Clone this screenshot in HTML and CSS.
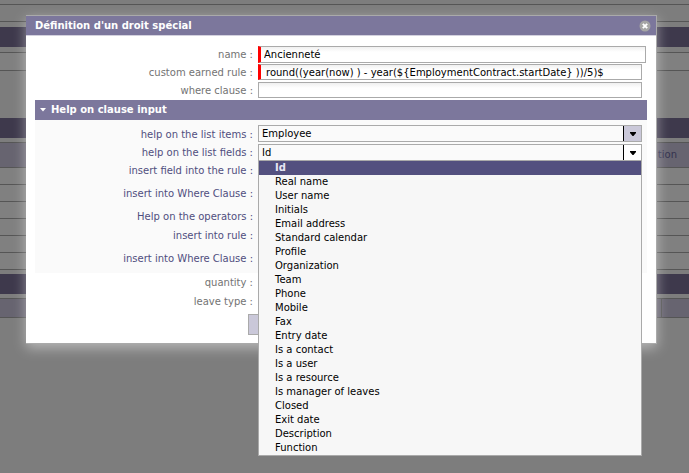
FILE: index.html
```html
<!DOCTYPE html>
<html lang="en">
<head>
<meta charset="utf-8">
<title>Définition d'un droit spécial</title>
<link rel="stylesheet" href="styles.css">
</head>
<body>
<div class="page" inert>
  <div class="line first"></div>
  <div class="line second"></div>
  <div class="bar"></div>
  <div class="block"></div>
  <div class="bar low"></div>
  <div class="head tall"><span>tion</span></div>
  <div class="record"></div>
  <div class="record"></div>
  <div class="record"></div>
  <div class="record"></div>
  <div class="record"></div>
  <div class="record"></div>
  <div class="bar low"></div>
  <div class="head short"><span class="cell"></span></div>
</div>

<div class="dialog" role="dialog" aria-labelledby="dialog-title">
  <header class="dialog-head">
    <h1 id="dialog-title">Définition d'un droit spécial</h1>
    <button class="close" type="button" aria-label="Close">
      <svg viewBox="0 0 12 12" width="12" height="12"><circle cx="6" cy="6" r="5.5" fill="#a5a5a5"/><path d="M3.8 3.8l4.4 4.4M8.2 3.8L3.8 8.2" stroke="#fff" stroke-width="1.9"/></svg>
    </button>
  </header>
  <form class="form">
    <div class="row wide"><label for="name">name :</label><input class="field required" id="name" type="text" value="Ancienneté"></div>
    <div class="row"><label for="rule">custom earned rule :</label><input class="field required indent" id="rule" type="text" value="round((year(now) ) - year(${EmploymentContract.startDate} ))/5)$"></div>
    <div class="row"><label for="where">where clause :</label><input class="field" id="where" type="text"></div>

    <section class="help">
      <h2><svg viewBox="0 0 6 4" width="6" height="4"><path d="M0 0h6L3 3.5z" fill="#fff"/></svg>Help on clause input</h2>
      <div class="panel">
        <div class="row mid"><label for="items">help on the list items :</label>
          <div class="combo">
            <select id="items"><option>Employee</option></select>
            <span class="arrow shaded"><svg viewBox="0 0 6 4" width="6" height="4"><path d="M0 0h6v1L3.5 4h-1L0 1z"/></svg></span>
          </div>
        </div>
        <div class="row"><label for="fields">help on the list fields :</label>
          <div class="combo">
            <select id="fields"><option>Id</option></select>
            <span class="arrow"><svg viewBox="0 0 6 4" width="6" height="4"><path d="M0 0h6v1L3.5 4h-1L0 1z"/></svg></span>
            <ul class="menu" role="listbox">
              <li class="selected" role="option" aria-selected="true">Id</li>
              <li role="option">Real name</li>
              <li role="option">User name</li>
              <li role="option">Initials</li>
              <li role="option">Email address</li>
              <li role="option">Standard calendar</li>
              <li role="option">Profile</li>
              <li role="option">Organization</li>
              <li role="option">Team</li>
              <li role="option">Phone</li>
              <li role="option">Mobile</li>
              <li role="option">Fax</li>
              <li role="option">Entry date</li>
              <li role="option">Is a contact</li>
              <li role="option">Is a user</li>
              <li role="option">Is a resource</li>
              <li role="option">Is manager of leaves</li>
              <li role="option">Closed</li>
              <li role="option">Exit date</li>
              <li role="option">Description</li>
              <li role="option">Function</li>
            </ul>
          </div>
        </div>
        <div class="row"><label for="insert-field">insert field into the rule :</label><input class="field" id="insert-field" type="text"></div>
        <div class="row high"><label for="insert-where">insert into Where Clause :</label><input class="field" id="insert-where" type="text"></div>
        <div class="row"><label for="operators">Help on the operators :</label><input class="field" id="operators" type="text"></div>
        <div class="row mid"><label for="op-rule">insert into rule :</label><input class="field" id="op-rule" type="text"></div>
        <div class="row high"><label for="op-where">insert into Where Clause :</label><input class="field" id="op-where" type="text"></div>
      </div>
    </section>

    <div class="row mid"><label for="quantity">quantity :</label><input class="field" id="quantity" type="text"></div>
    <div class="row mid"><label for="leave">leave type :</label><input class="field" id="leave" type="text"></div>
    <div class="actions"><button class="save" type="button" aria-label="Save"></button></div>
  </form>
</div>
</body>
</html>
```
FILE: styles.css
```css
* { box-sizing: border-box; }

body {
  margin: 0;
  min-height: 100vh;
  position: relative;
  background: #7d7d7d;
  font: 10px/14px "DejaVu Sans", Verdana, sans-serif;
}

input, select, button { font: inherit; }

/* Dimmed page behind the dialog */
.page { display: flow-root; }
.line { border-top: 1px solid #555; }
.line.first { margin-top: 4px; }
.line.second { margin-top: 16px; }
.bar { height: 20px; margin: 5px 0; background: #3e394c; }
.bar.low { margin: 4px 0; }
.block { height: 19px; margin-bottom: 47px; border: solid #555; border-width: 1px 0; background: #808080; }
.head {
  display: flex;
  align-items: center;
  justify-content: flex-end;
  border: solid #555;
  border-width: 1px 0;
  background: #676470;
  color: #34324f;
}
.head.tall { height: 26px; padding-right: 12px; }
.head.short { height: 20px; align-items: stretch; }
.cell { width: 28px; border-left: 1px solid #555; }
.record { height: 17px; border-bottom: 1px solid #555; background: #808080; }

/* Dialog */
.dialog {
  position: absolute;
  top: 15px;
  left: 26px;
  right: 32px;
  border: solid #aaa;
  border-width: 1px 1px 1px 0;
  background: #fff;
  box-shadow: 0 4px 12px rgba(255, 255, 255, .45);
}
.dialog-head {
  display: flex;
  align-items: center;
  justify-content: space-between;
  height: 20px;
  padding: 0 5px 0 9px;
  border-bottom: 1px solid #d3d1de;
  background: #7c779c;
  color: #fff;
}
h1, h2 { margin: 0; font-size: 10px; line-height: 20px; font-weight: bold; }
.close { display: flex; padding: 0; border: 0; background: none; }
.form { padding: 10px 9px 8px; color: #737373; }

.row {
  display: grid;
  grid-template-columns: 218px 1fr;
  column-gap: 5px;
  height: 18px;
  padding-right: 5px;
}
.row.mid { height: 19px; }
.row.high { height: 28px; align-items: center; }
.row.wide { padding-right: 1px; }
.row label { align-self: center; text-align: right; }

.field {
  width: 100%;
  height: 16px;
  padding: 0 3px;
  border: 1px solid #aaa;
  background: linear-gradient(#f0f0f0, #fff 5px);
  color: #000;
}
.wide .field { height: 17px; }
.field.required { border-left: 3px solid #f00; }
.field.indent { padding-left: 5px; }

.help h2 { display: flex; align-items: center; gap: 5px; padding-left: 5px; background: #7c779c; color: #fff; }
.panel { padding-top: 5px; background: #fafafa; color: #504e7e; }

.combo { position: relative; display: flex; height: 17px; border: 1px solid #aaa; }
.combo select {
  flex: 1;
  min-width: 0;
  padding: 0 3px;
  border: 0;
  appearance: none;
  background: #fafafa;
  color: #000;
}
.arrow { display: flex; align-items: center; justify-content: center; width: 18px; border-left: 1px solid #000; background: #fff; }
.arrow.shaded { background: #cac8d9; }

.menu {
  position: absolute;
  z-index: 1;
  top: 15px;
  left: -1px;
  right: -1px;
  margin: 0;
  padding: 0;
  border: 1px solid #aaa;
  background: #f7f7f7;
  color: #000;
  list-style: none;
}
.menu li { padding-left: 16px; }
.menu .selected { background: #53507f; color: #e8e8f4; font-weight: bold; }

.actions { padding: 3px 0 0 213px; }
.save { display: block; width: 90px; height: 21px; border: 1px solid #aaa; background: #cac8d9; }
```
